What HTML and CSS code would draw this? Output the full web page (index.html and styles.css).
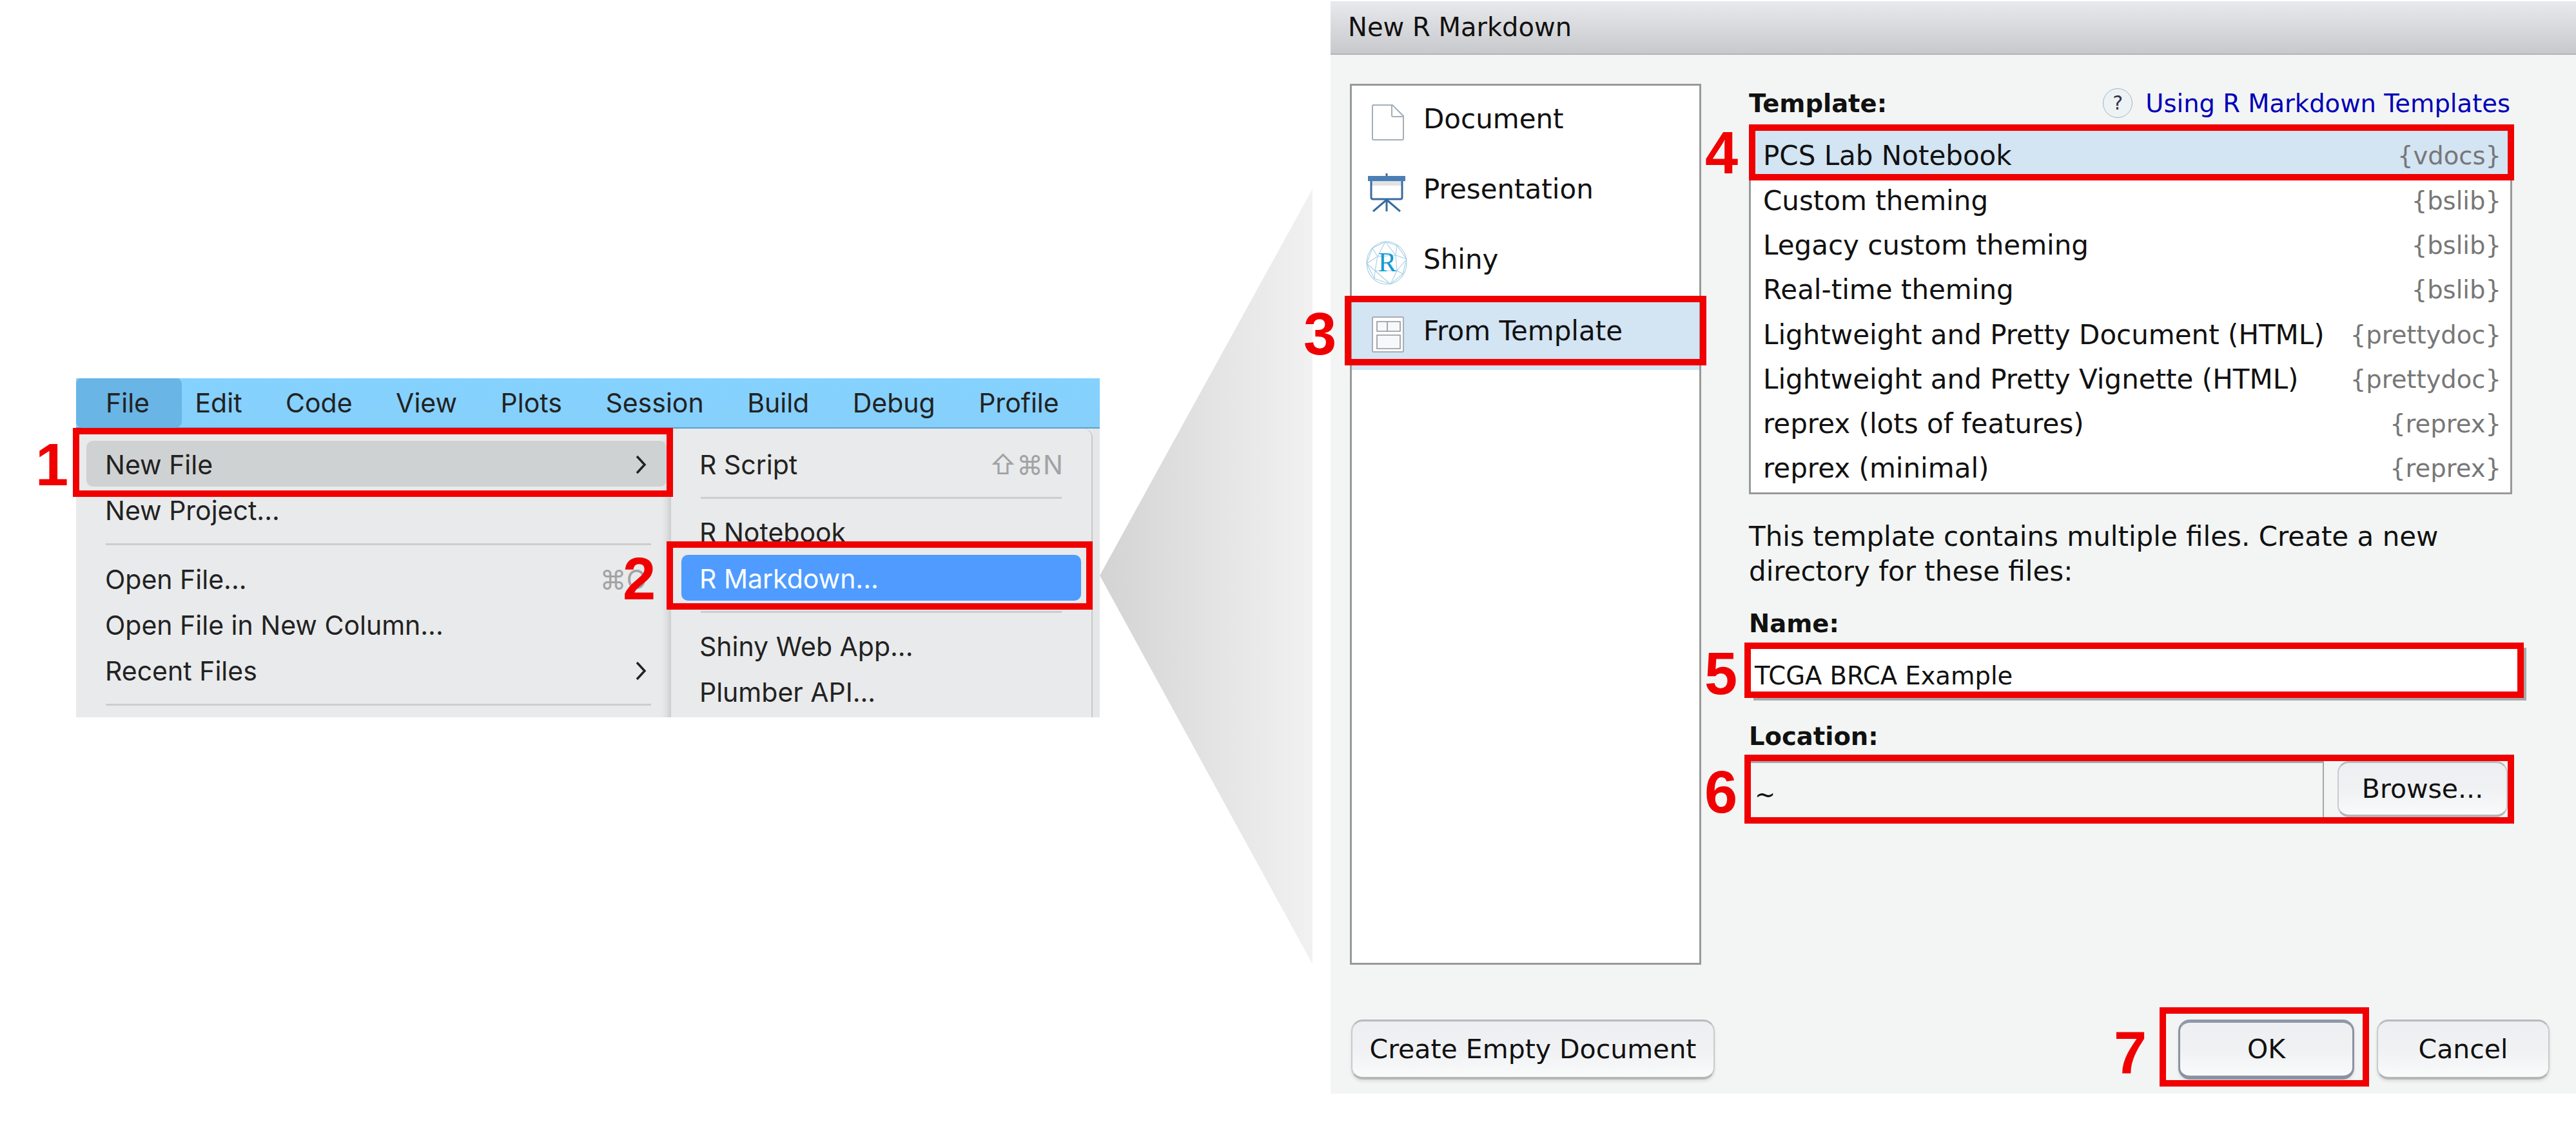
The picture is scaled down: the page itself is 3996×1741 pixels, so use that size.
FILE: index.html
```html
<!DOCTYPE html>
<html lang="en">
<head>
    <meta charset="UTF-8">
    <title>New R Markdown from template</title>
    <link rel="stylesheet" href="styles.css">
</head>
<body>
    <div class="figure">

        <!-- cropped RStudio menu -->
        <div class="menuShot">
            <div class="menuBar">
                <span class="barItem barActive">File</span>
                <span class="barItem">Edit</span>
                <span class="barItem">Code</span>
                <span class="barItem">View</span>
                <span class="barItem">Plots</span>
                <span class="barItem">Session</span>
                <span class="barItem">Build</span>
                <span class="barItem">Debug</span>
                <span class="barItem">Profile</span>
            </div>
            <div class="menuBody">
                <div class="fileMenu">
                    <div class="fileRow fileRowOn"><span>New File</span><svg class="chevron" viewBox="0 0 18 30"><path d="M3 2 L15 15 L3 28"/></svg></div>
                    <div class="fileRow"><span>New Project...</span></div>
                    <div class="fileSep"></div>
                    <div class="fileRow"><span>Open File...</span><span class="shortcut">⌘O</span></div>
                    <div class="fileRow"><span>Open File in New Column...</span></div>
                    <div class="fileRow"><span>Recent Files</span><svg class="chevron" viewBox="0 0 18 30"><path d="M3 2 L15 15 L3 28"/></svg></div>
                    <div class="fileSep"></div>
                </div>
                <div class="subMenu">
                    <div class="subRow"><span>R Script</span><span class="shortcut">⇧⌘N</span></div>
                    <div class="subSep"></div>
                    <div class="subRow subRowClip"><span>R Notebook</span></div>
                    <div class="subRow subRowOn"><span>R Markdown...</span></div>
                    <div class="subSep"></div>
                    <div class="subRow"><span>Shiny Web App...</span></div>
                    <div class="subRow"><span>Plumber API...</span></div>
                </div>
                <div class="menuEdge"></div>
            </div>
        </div>

        <svg class="funnel" viewBox="0 0 330 1203">
            <defs>
                <linearGradient id="funnelFill" x1="0" x2="1" y1="0" y2="0">
                    <stop offset="0" stop-color="#d3d3d3"/>
                    <stop offset="0.55" stop-color="#e4e4e4"/>
                    <stop offset="1" stop-color="#f1f1f1"/>
                </linearGradient>
            </defs>
            <polygon points="0,600 330,0 330,1203" fill="url(#funnelFill)"/>
        </svg>

        <!-- New R Markdown dialog -->
        <div class="dialog">
            <div class="titleBar">New R Markdown</div>
            <div class="dialogBody">
                <div class="sideList">
                    <div class="sideItem">
                        <svg class="sideIcon" viewBox="0 0 60 60">
                            <path d="M8 3 H39 L56 20 V55 Q56 57 54 57 H10 Q8 57 8 55 V5 Q8 3 10 3 Z" fill="#fff" stroke="#a3aeb9" stroke-width="2"/>
                            <path d="M38 4 V19 Q38 21 40 21 H55" fill="none" stroke="#a3aeb9" stroke-width="2"/>
                        </svg>
                        <span class="sideText">Document</span>
                    </div>
                    <div class="sideItem">
                        <svg class="sideIcon" viewBox="0 0 60 60">
                            <rect x="28.5" y="0" width="3" height="5" fill="#3a6ba0"/>
                            <rect x="1" y="4" width="58" height="8" fill="#4a7fb5"/>
                            <rect x="7" y="12" width="46" height="7" fill="#e2e2e2"/>
                            <path d="M6 12 V37 Q6 40 9 40 H51 Q54 40 54 37 V12" fill="none" stroke="#3a6ba0" stroke-width="3"/>
                            <path d="M30 40 V59 M30 41 L9 59 M30 41 L51 59" fill="none" stroke="#3a6ba0" stroke-width="3"/>
                        </svg>
                        <span class="sideText">Presentation</span>
                    </div>
                    <div class="sideItem">
                        <svg class="sideIcon sideIconShiny" viewBox="0 0 64 68">
                            <g fill="none" stroke="#a6cfe4" stroke-width="1.1">
                                <ellipse cx="32" cy="34" rx="31" ry="33"/>
                                <path d="M30 1 L10 11 L1 35 L13 58 L38 67 L57 51 L63 28 L48 7 Z"/>
                                <path d="M30 1 L18 24 L10 11 M30 1 L46 22 L48 7 M46 22 L63 28 M46 22 L18 24 M18 24 L1 35 M18 24 L14 46 L1 35 M14 46 L13 58 M14 46 L38 67 M14 46 L48 46 L46 22 M48 46 L38 67 M48 46 L57 51 M48 46 L63 28"/>
                            </g>
                            <text x="33" y="47" text-anchor="middle" class="shinyR">R</text>
                        </svg>
                        <span class="sideText">Shiny</span>
                    </div>
                    <div class="sideItem sideItemOn">
                        <svg class="sideIcon" viewBox="0 0 60 60">
                            <rect x="8" y="4" width="48" height="54" rx="1.5" fill="#fff" stroke="#a8aeb5" stroke-width="2"/>
                            <path d="M15 11 H31 V26 H15 Z M31 11 H51 V26 H31 Z M15 32 H51 V53 H15 Z" fill="#f6f8fa" stroke="#8f959c" stroke-width="1.6"/>
                        </svg>
                        <span class="sideText">From Template</span>
                    </div>
                </div>

                <div class="formCol">
                    <div class="templateHead">
                        <span class="fieldLabel">Template:</span>
                        <span class="helpLink"><span class="helpIcon">?</span><span class="linkText">Using R Markdown Templates</span></span>
                    </div>
                    <div class="templateList">
                        <div class="tplRow tplRowOn"><span>PCS Lab Notebook</span><span class="pkg">{vdocs}</span></div>
                        <div class="tplRow"><span>Custom theming</span><span class="pkg">{bslib}</span></div>
                        <div class="tplRow"><span>Legacy custom theming</span><span class="pkg">{bslib}</span></div>
                        <div class="tplRow"><span>Real-time theming</span><span class="pkg">{bslib}</span></div>
                        <div class="tplRow"><span>Lightweight and Pretty Document (HTML)</span><span class="pkg">{prettydoc}</span></div>
                        <div class="tplRow"><span>Lightweight and Pretty Vignette (HTML)</span><span class="pkg">{prettydoc}</span></div>
                        <div class="tplRow"><span>reprex (lots of features)</span><span class="pkg">{reprex}</span></div>
                        <div class="tplRow"><span>reprex (minimal)</span><span class="pkg">{reprex}</span></div>
                    </div>
                    <p class="formNote">This template contains multiple files. Create a new directory for these files:</p>
                    <div class="fieldLabel nameLabel">Name:</div>
                    <div class="nameField">TCGA BRCA Example</div>
                    <div class="fieldLabel locationLabel">Location:</div>
                    <div class="locationRow">
                        <div class="locationField">~</div>
                        <button type="button" class="btn browseBtn">Browse...</button>
                    </div>
                </div>
            </div>
            <div class="dialogFoot">
                <button type="button" class="btn emptyBtn">Create Empty Document</button>
                <div class="footRight">
                    <button type="button" class="btn okBtn">OK</button>
                    <button type="button" class="btn cancelBtn">Cancel</button>
                </div>
            </div>
        </div>

        <!-- red call-outs drawn on top of the screenshots -->
        <div class="callBox box1"></div>
        <div class="callBox box2"></div>
        <div class="callBox box3"></div>
        <div class="callBox box4"></div>
        <div class="callBox box5"></div>
        <div class="callBox box6"></div>
        <div class="callBox box7"></div>
        <span class="callNum num1">1</span>
        <span class="callNum num2">2</span>
        <span class="callNum num3">3</span>
        <span class="callNum num4">4</span>
        <span class="callNum num5">5</span>
        <span class="callNum num6">6</span>
        <span class="callNum num7">7</span>
    </div>
</body>
</html>
```

FILE: styles.css
```css
body {
    margin: 0;
    background-color: white;
}
.figure {
    position: relative;
    display: flex;
    align-items: flex-start;
    width: 3996px;
    height: 1741px;
    overflow: hidden;
}

/* menu crop */
.menuShot {
    width: 1588px;
    height: 526px;
    margin-left: 118px;
    margin-top: 587px;
    font-family: "Inter", sans-serif;
    font-size: 41px;
    color: #222;
    overflow: hidden;
    flex-shrink: 0;
}
.menuBar {
    display: flex;
    align-items: center;
    gap: 67.5px;
    height: 78px;
    background: linear-gradient(#85d2fe, #86cffb);
    border-bottom: 2px solid #5c9fcb;
    box-sizing: border-box;
}
.barItem {
    line-height: 78px;
}
.barActive {
    padding: 0 50px 0 46px;
    margin-right: -47px;
    background-color: #68b5e6;
    border-radius: 10px;
}
.menuBody {
    display: flex;
    height: 448px;
    background-color: #e9eaeb;
}
.fileMenu {
    width: 921px;
    padding-top: 19px;
    box-sizing: border-box;
    box-shadow: inset -14px 0 14px -14px #bbb;
}
.fileRow {
    display: flex;
    justify-content: space-between;
    align-items: center;
    height: 71px;
    padding: 2px 36px 0 45px;
    box-sizing: border-box;
}
.fileRowOn {
    margin: 0 5px 0 16px;
    padding: 2px 31px 0 29px;
    background-color: #cfd2d2;
    border-radius: 10px;
}
.fileSep {
    height: 3px;
    margin: 17px 29px 16px 46px;
    background-color: #cccdcf;
}
.chevron {
    width: 18px;
    height: 30px;
    fill: none;
    stroke: #222;
    stroke-width: 3.5;
}
.shortcut {
    color: #a2a3a5;
}
.subMenu {
    width: 656px;
    padding-top: 19px;
    box-sizing: border-box;
    border-left: 2px solid #cfd0d2;
    border-right: 2px solid #c8c9cb;
    border-top-left-radius: 14px;
    border-top-right-radius: 14px;
}
.subRow {
    display: flex;
    justify-content: space-between;
    align-items: center;
    height: 71px;
    margin: 0 16px;
    padding: 3px 28px 0;
    box-sizing: border-box;
    border-radius: 10px;
}
.subRowClip {
    margin-bottom: 1px;
}
.subRowOn {
    background-color: #4f9bff;
    color: white;
}
.subSep {
    height: 3px;
    margin: 16px 46px 15px 46px;
    background-color: #cccdcf;
}
.menuEdge {
    width: 11px;
    background-color: #e6e7e8;
}

.funnel {
    width: 330px;
    height: 1203px;
    margin-top: 293px;
    flex-shrink: 0;
}

/* dialog */
.dialog {
    display: flex;
    flex-direction: column;
    width: 1932px;
    height: 1695px;
    margin-top: 2px;
    margin-left: 28px;
    flex-shrink: 0;
    background-color: #f3f5f4;
    font-family: "DejaVu Sans", sans-serif;
    font-size: 42px;
    color: #111;
}
.titleBar {
    height: 83px;
    line-height: 80px;
    padding-left: 27px;
    box-sizing: border-box;
    font-size: 40px;
    background: linear-gradient(#e8e9ec, #c8c9cc);
    border-bottom: 2px solid #b2b3b6;
}
.dialogBody {
    display: flex;
    height: 1412px;
    padding-top: 45px;
    padding-left: 30px;
    box-sizing: border-box;
}
.sideList {
    width: 545px;
    height: 1367px;
    padding-top: 2px;
    box-sizing: border-box;
    background-color: white;
    border: 3px solid #999;
}
.sideItem {
    display: flex;
    align-items: center;
    gap: 27px;
    height: 109px;
    padding-left: 24px;
}
.sideItemOn {
    background-color: #d3e4f3;
    height: 112px;
}
.sideText {
    margin-bottom: 10px;
}
.sideIcon {
    width: 60px;
    height: 60px;
    flex-shrink: 0;
}
.sideIconShiny {
    width: 64px;
    height: 68px;
    margin: 0 -2px;
}
.shinyR {
    font-family: "Liberation Serif", serif;
    font-size: 42px;
    fill: #159bd3;
}
.formCol {
    width: 1202px;
    margin-left: 74px;
}
.templateHead {
    display: flex;
    justify-content: space-between;
    align-items: center;
    height: 63px;
    padding-bottom: 3px;
    padding-right: 21px;
    box-sizing: border-box;
}
.fieldLabel {
    font-weight: bold;
    font-size: 38.5px;
}
.helpLink {
    display: flex;
    align-items: center;
    gap: 20px;
    font-size: 38.5px;
    color: #0000b8;
}
.helpIcon {
    width: 44px;
    height: 44px;
    line-height: 44px;
    text-align: center;
    border: 1px solid #9db6c4;
    border-radius: 50%;
    background-color: #edf2f4;
    color: #334;
    font-size: 30px;
}
.templateList {
    width: 1184px;
    height: 574px;
    box-sizing: border-box;
    background-color: white;
    border: 3px solid #999;
}
.tplRow {
    display: flex;
    justify-content: space-between;
    align-items: center;
    height: 69.3px;
    padding: 0 14px 5px 19px;
    box-sizing: border-box;
}
.tplRowOn {
    height: 83px;
    padding-top: 13px;
    background-color: #d3e4f3;
}
.pkg {
    font-size: 38.5px;
    color: #777;
}
.formNote {
    width: 1180px;
    margin: 39px 0 0 0;
    line-height: 54px;
}
.nameLabel {
    margin-top: 27px;
    line-height: 54px;
}
.nameField {
    width: 1199px;
    height: 82px;
    margin-top: 6px;
    margin-left: 3px;
    padding-left: 6px;
    padding-top: 15px;
    box-sizing: border-box;
    font-size: 38.5px;
    line-height: 66px;
    background-color: white;
    box-shadow: 4px 4px 0 #a8a9ab;
}
.locationLabel {
    margin-top: 33px;
    line-height: 54px;
}
.locationRow {
    display: flex;
    align-items: stretch;
    width: 1174px;
    height: 87px;
    margin-top: 11px;
    margin-left: 3px;
    gap: 21px;
}
.locationField {
    width: 889px;
    padding-left: 6px;
    padding-top: 16px;
    box-sizing: border-box;
    font-size: 38.5px;
    line-height: 66px;
    border-top: 3px solid #a5a6a8;
    border-right: 2px solid #a5a6a8;
}
.btn {
    font-family: "DejaVu Sans", sans-serif;
    font-size: 41px;
    color: #111;
    padding: 0;
    background: linear-gradient(#eeeff2, #f0f1f3 50%, #f9fafa);
    border: 2px solid #c9cacc;
    border-top: 3px solid #b9babc;
    border-bottom: 4px solid #b5b6b8;
    border-radius: 18px;
}
.browseBtn {
    width: 264px;
}
.dialogFoot {
    display: flex;
    justify-content: space-between;
    height: 93px;
    margin-top: 85px;
    padding: 0 41px 0 32px;
}
.dialogFoot .btn {
    box-shadow: 0 3px 4px #dcdddd;
}
.emptyBtn {
    width: 564px;
}
.footRight {
    display: flex;
    gap: 35px;
}
.okBtn {
    width: 273px;
    border: 3px solid #8a93a3;
    border-top: 5px solid #8f98a8;
    border-bottom: 6px solid #8a93a3;
}
.cancelBtn {
    width: 268px;
}

/* call-outs */
.callBox {
    position: absolute;
    border: 10px solid #f00000;
    box-sizing: border-box;
}
.box1 { left: 113px; top: 664px; width: 931px; height: 107px; }
.box2 { left: 1034px; top: 840px; width: 661px; height: 106px; }
.box3 { left: 2086px; top: 459px; width: 561px; height: 108px; }
.box4 { left: 2713px; top: 193px; width: 1187px; height: 87px; }
.box5 { left: 2706px; top: 997px; width: 1209px; height: 86px; }
.box6 { left: 2706px; top: 1171px; width: 1194px; height: 107px; }
.box7 { left: 3350px; top: 1563px; width: 325px; height: 123px; }
.callNum {
    position: absolute;
    font-family: "Liberation Sans", sans-serif;
    font-weight: bold;
    font-size: 92px;
    line-height: 92px;
    color: #f00000;
}
.num1 { left: 55px; top: 675px; }
.num2 { left: 966px; top: 852px; }
.num3 { left: 2022px; top: 472px; }
.num4 { left: 2645px; top: 191px; }
.num5 { left: 2644px; top: 999px; }
.num6 { left: 2644px; top: 1183px; }
.num7 { left: 3279px; top: 1587px; }
```
